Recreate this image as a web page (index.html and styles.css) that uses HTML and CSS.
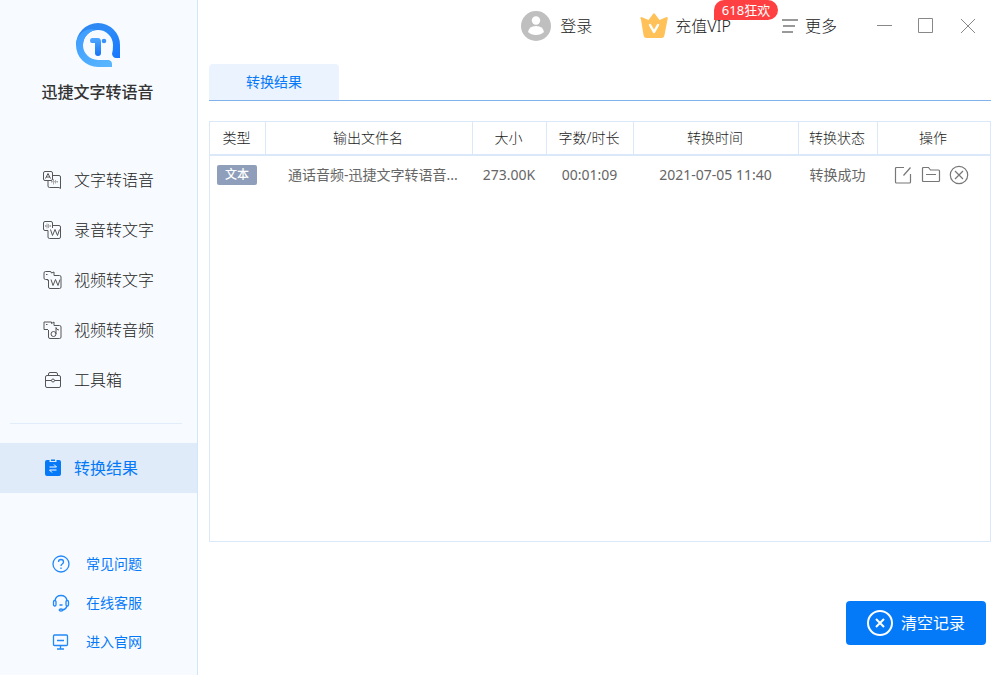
FILE: index.html
```html
<!DOCTYPE html>
<html lang="zh-CN">
<head>
<meta charset="utf-8">
<title>迅捷文字转语音</title>
<link rel="stylesheet" href="styles.css">
</head>
<body>
<div class="app">
  <aside class="sidebar">
    <div class="brand">
      <svg class="brand-logo" viewBox="0 0 44 44">
        <defs>
          <linearGradient id="ring" x1="0" y1="0" x2="1" y2="1">
            <stop offset="0" stop-color="#2f86ee"/><stop offset="0.5" stop-color="#2c8bf8"/><stop offset="1" stop-color="#1677ff"/>
          </linearGradient>
          <linearGradient id="sweep" x1="0" y1="0" x2="1" y2="1">
            <stop offset="0" stop-color="#3d9bff"/><stop offset="1" stop-color="#5ab8ff"/>
          </linearGradient>
          <linearGradient id="stem" x1="0" y1="0" x2="0" y2="1">
            <stop offset="0" stop-color="#4fa8ff"/><stop offset="1" stop-color="#1673f5"/>
          </linearGradient>
        </defs>
        <path fill="url(#ring)" d="M0 22A22 22 0 0 1 44 22V35H40Q37 35 36 31Q37 28 37 22A15 15 0 0 0 7 22Z"/>
        <path fill="url(#sweep)" d="M0 22Q1 12 8 8Q13 5 20 7A15 15 0 0 0 7 22A15 15 0 0 0 22 37H33Q36 38 36 41V44H22A22 22 0 0 1 0 22Z"/>
        <path fill="url(#stem)" d="M16 15H22Q25 15 25 19V30Q25 33 22 33Q19 33 19 30V20H16Q14 20 14 17.500T16 15Z"/>
        <circle cx="28" cy="18" r="2.300" fill="#3a92fb"/>
      </svg>
      <h1 class="brand-name">迅捷文字转语音</h1>
    </div>

    <nav class="nav">
      <a class="nav-item" href="#tts">
        <svg class="nav-icon" viewBox="0 0 19 19"><rect x=".5" y=".5" width="9" height="9" rx="1.500"/><path d="M9.500 4.500h6.500Q17.500 4.500 17.500 6v11.500L16 16.500H6.500Q5 16.500 5 15V9.500M2.500 7.500 5 2.500l2.500 5M3.300 6h3.400"/><path class="faint" d="M8.500 10v1.500M10.500 8v5.500M12.500 9v3.500M14.500 10v1.500M8 10.700h7"/></svg>
        <span>文字转语音</span>
      </a>
      <a class="nav-item" href="#stt">
        <svg class="nav-icon" viewBox="0 0 19 19"><path d="M5 9.500H2Q.5 9.500.5 8V2Q.5.500 2 .500h6Q9.500.500 9.500 2v5M9.500 4.500h6.500q1.500 0 1.500 1.500v10q0 1.500-1.500 1.500H6.500Q5 17.500 5 16V9.500M7.500 8.500l2 6L12 8.500l2.500 6 2-6"/><path class="faint" d="M2.500 4v2M4 2.500v5M5.500 3v4M7.500 4v2M2 5h6"/></svg>
        <span>录音转文字</span>
      </a>
      <a class="nav-item" href="#video-text">
        <svg class="nav-icon" viewBox="0 0 19 19"><path d="M5 8.500H2.500Q1 8.500 1 7V2Q1 .500 2.500.500H7Q8.500.500 8.500 2L11 1v3.500M5 10V8.500M11 4.500h5.500q1.500 0 1.500 1.500v10q0 1.500-1.500 1.500H7q-1.500 0-1.500-1.500V9M8 8.500l2 6 2.500-6 2.500 6 2-6M3 3.500h1.500"/></svg>
        <span>视频转文字</span>
      </a>
      <a class="nav-item" href="#video-audio">
        <svg class="nav-icon" viewBox="0 0 19 19"><path d="M5 8.500H1V1h7.500v1.500L11 1v3.500M11 4.500h5.500q1.500 0 1.500 1.500v10q0 1.500-1.500 1.500H7q-1.500 0-1.500-1.500V9M3 3.500h1.500M13 13V6.500q.5 2.500 3 2.500"/><circle cx="10.500" cy="13" r="2.500"/></svg>
        <span>视频转音频</span>
      </a>
      <a class="nav-item" href="#tools">
        <svg class="nav-icon" viewBox="0 0 19 19"><rect x="2.500" y="4.500" width="15" height="12" rx="1.500"/><path d="M5.500 4.500V3Q5.500 1.500 7 1.500h6q1.500 0 1.500 1.500v1.500M2.500 9.500h6m3 0h6"/><circle cx="10" cy="9.500" r="1.500"/></svg>
        <span>工具箱</span>
      </a>
    </nav>
    <hr class="divider">
    <a class="nav-item current" href="#results" aria-current="page">
      <svg class="nav-icon" viewBox="0 0 19 19"><path class="solid" d="M4 1h2.500v2h7V1H16q2 0 2 2v12q0 2-2 2H4q-2 0-2-2V3q0-2 2-2Z"/><path class="solid" d="M8 .500h4v1.500H8Z"/><path class="light" d="M6.500 8h7L11 5.500M13.500 11h-7L9 13.500"/></svg>
      <span>转换结果</span>
    </a>

    <nav class="help">
      <a class="help-item" href="#faq">
        <svg class="help-icon" viewBox="0 0 18 18"><circle cx="9" cy="9" r="8"/><path d="M6.500 7q0-2.500 2.500-2.500T11.500 7q0 1.200-1.300 2T9 11M9 12.500V14"/></svg>
        <span>常见问题</span>
      </a>
      <a class="help-item" href="#service">
        <svg class="help-icon" viewBox="0 0 18 18"><path d="M3 6.500Q4 1.500 9 1.500t6 5M15 12q-1 3.500-4.500 4M7.500 11h3"/><rect x="1.500" y="6.500" width="2.500" height="5.500" rx="1.200"/><rect x="14" y="6.500" width="2.500" height="5.500" rx="1.200"/><ellipse cx="9" cy="16" rx="1.800" ry="1"/></svg>
        <span>在线客服</span>
      </a>
      <a class="help-item" href="#site">
        <svg class="help-icon" viewBox="0 0 18 18"><rect x="1.500" y="2" width="14" height="10.500" rx="1"/><path d="M5 7.500h7M8.500 12.500V16M5 16h7"/></svg>
        <span>进入官网</span>
      </a>
    </nav>
  </aside>

  <main class="main">
    <header class="topbar">
      <button class="top-button login" type="button">
        <svg class="avatar" viewBox="0 0 30 30"><circle cx="15" cy="15" r="15" fill="#bfbfbf"/><circle cx="15" cy="9.500" r="4.200" fill="#fff"/><path fill="#fff" d="M7 21q1-6 8-6t8 6q-3 3-8 3t-8-3Z"/></svg>
        <span>登录</span>
      </button>
      <button class="top-button vip" type="button">
        <svg class="crown" viewBox="0 0 28 26"><path fill="#ffc158" d="M1 6.500q-1.500-2 .5-2.500l7 3L13 1q1-1.500 2 0l4.500 6 7-3q2 .5 1 2.500L24.500 22q-.5 3-3 3h-15q-2.500 0-3-3Z"/><path fill="none" stroke="#fff" stroke-width="2.500" stroke-linecap="round" stroke-linejoin="round" d="m10 12 4 7 4-7"/></svg>
        <span>充值VIP</span>
        <span class="promo">618狂欢</span>
      </button>
      <button class="top-button more" type="button">
        <svg class="menu-icon" viewBox="0 0 16 16"><path d="M0 2h16M1 8h12M0 14h11"/></svg>
        <span>更多</span>
      </button>
      <div class="window-controls">
        <button type="button" aria-label="最小化"><svg viewBox="0 0 16 16"><path d="M1 7.500h15"/></svg></button>
        <button type="button" aria-label="最大化"><svg viewBox="0 0 16 16"><path d="M.5.5h14v14H.5Z"/></svg></button>
        <button type="button" aria-label="关闭"><svg viewBox="0 0 16 16"><path d="m1 1 14 14M15 1 1 15"/></svg></button>
      </div>
    </header>

    <div class="tabs"><button class="tab" type="button">转换结果</button></div>

    <section class="panel">
      <table class="results">
        <colgroup><col class="c-type"><col><col class="c-size"><col class="c-length"><col class="c-time"><col class="c-state"><col class="c-actions"></colgroup>
        <thead>
          <tr><th>类型</th><th>输出文件名</th><th>大小</th><th>字数/时长</th><th>转换时间</th><th>转换状态</th><th>操作</th></tr>
        </thead>
        <tbody>
          <tr>
            <td><span class="tag">文本</span></td>
            <td class="filename">通话音频-迅捷文字转语音...</td>
            <td>273.00K</td>
            <td>00:01:09</td>
            <td>2021-07-05 11:40</td>
            <td>转换成功</td>
            <td>
              <div class="actions">
                <button type="button" aria-label="编辑"><svg viewBox="0 0 20 20"><path d="M11 2.500H3.500q-1 0-1 1V17q0 1 1 1h13q1 0 1-1V9M17.500 2.500l-7 8"/></svg></button>
                <button type="button" aria-label="打开文件夹"><svg viewBox="0 0 20 20"><path d="M1.500 15.500v-12q0-1 1-1h5l2 2.500h8q1 0 1 1v9.500q0 1-1 1h-15q-1 0-1-1ZM5 9.500h10"/></svg></button>
                <button type="button" aria-label="删除"><svg viewBox="0 0 20 20"><circle cx="10" cy="10" r="8.700"/><path d="m6 6 8 8m0-8-8 8"/></svg></button>
              </div>
            </td>
          </tr>
        </tbody>
      </table>
    </section>

    <footer class="footer">
      <button class="clear" type="button">
        <svg class="clear-icon" viewBox="0 0 26 26"><circle cx="13" cy="13" r="12"/><path d="m9 9 8 8m0-8-8 8"/></svg>
        <span>清空记录</span>
      </button>
    </footer>
  </main>
</div>
</body>
</html>
```

FILE: styles.css
```css
* { box-sizing: border-box; }

body {
  margin: 0;
  background: #fff;
  color: #222;
  font: 16px/24px "Noto Sans", "Noto Sans CJK SC", sans-serif;
  font-weight: 300;
}

a { color: inherit; text-decoration: none; }

button {
  padding: 0;
  border: 0;
  background: none;
  color: inherit;
  font: inherit;
  cursor: pointer;
}

svg { display: block; flex: none; fill: none; }

.app { display: flex; min-height: 100vh; }

/* Sidebar */
.sidebar {
  flex: none;
  width: 198px;
  background: #f7fbff;
  border-right: 1px solid #d3e5f8;
}

.brand {
  display: flex;
  flex-direction: column;
  align-items: center;
  gap: 13px;
  padding: 23px 2px 51px 0;
}
.brand-logo { width: 44px; height: 44px; }
.brand-name { margin: 0; font-size: 16px; line-height: 24px; font-weight: 500; color: #333; }

.nav-item {
  display: flex;
  align-items: center;
  gap: 12px;
  height: 50px;
  padding-left: 43px;
}
.nav-icon { width: 19px; height: 19px; stroke: #555; }
.nav-icon .faint { stroke: #aaa; }
.nav-icon .solid { fill: #0579f8; stroke: none; }
.nav-icon .light { stroke: #fff; }

.divider { height: 1px; margin: 18px 15px 19px 10px; border: 0; background: #e1edfa; }

.current { background: #dfebf8; color: #0579f8; font-weight: 400; }

.help { padding-top: 51px; }
.help-item {
  display: flex;
  align-items: center;
  gap: 16px;
  height: 39px;
  padding-left: 52px;
  color: #0579f8;
  font-size: 14px;
  font-weight: 400;
}
.help-icon { width: 18px; height: 18px; stroke: #2388f8; stroke-width: 1.3; }

/* Main area */
.main {
  display: flex;
  flex: 1;
  flex-direction: column;
  min-width: 0;
  padding: 0 15px 0 11px;
}

.topbar {
  display: flex;
  align-items: center;
  justify-content: flex-end;
  height: 52px;
  padding-right: 15px;
}
.top-button { display: flex; align-items: center; }
.login { gap: 9px; margin-right: 48px; }
.avatar { width: 30px; height: 30px; }
.vip { position: relative; gap: 7px; margin-right: 51px; }
.crown { width: 28px; height: 26px; }
.promo {
  position: absolute;
  top: -13px;
  right: -47px;
  width: 64px;
  border-radius: 10px 10px 10px 0;
  background: #ff4042;
  color: #fff;
  font-size: 13px;
  line-height: 20px;
  font-weight: 400;
}
.more { gap: 7px; margin-right: 39px; }
.menu-icon { width: 16px; height: 16px; stroke: #999; stroke-width: 2; }
.window-controls { display: flex; gap: 26px; }
.window-controls svg { width: 16px; height: 16px; stroke: #888; }

.tabs { display: flex; margin-top: 12px; border-bottom: 1px solid #80b3ec; }
.tab {
  width: 130px;
  height: 36px;
  border-radius: 4px 4px 0 0;
  background: #ebf3ff;
  color: #0579f8;
  font-size: 14px;
  font-weight: 400;
}

.panel { flex: 1; margin-top: 20px; border: 1px solid #dae8f9; }

.results {
  width: 100%;
  table-layout: fixed;
  border-spacing: 0;
  font-size: 14px;
  line-height: 20px;
  text-align: center;
}
.results th {
  height: 34px;
  padding: 0 2px 0 0;
  border-right: 1px solid #dae8f9;
  border-bottom: 2px solid #dae8f9;
  font-weight: inherit;
}
.results th:last-child { border-right: 0; }
.results td { height: 37px; padding: 0 2px 0 0; color: #666; font-weight: 400; }
.results .filename {
  padding-left: 22px;
  overflow: hidden;
  text-align: left;
  text-overflow: ellipsis;
  white-space: nowrap;
}
.c-type { width: 56px; }
.c-size { width: 74px; }
.c-length { width: 87px; }
.c-time { width: 165px; }
.c-state { width: 79px; }
.c-actions { width: 112px; }

.tag {
  display: block;
  width: 40px;
  margin: 0 auto;
  border-radius: 2px;
  background: #8f9fbb;
  color: #fff;
  font-size: 12px;
  font-weight: 500;
}

.actions { display: flex; justify-content: center; gap: 8px; padding-right: 4px; }
.actions svg { width: 20px; height: 20px; stroke: #777; stroke-width: 1.2; }

.footer { display: flex; justify-content: flex-end; padding: 59px 5px 30px 0; }
.clear {
  display: flex;
  align-items: center;
  justify-content: center;
  gap: 8px;
  width: 140px;
  height: 44px;
  border-radius: 4px;
  background: #057af8;
  color: #fff;
  font-weight: 400;
}
.clear-icon { width: 26px; height: 26px; stroke: #fff; stroke-width: 2; }
```
